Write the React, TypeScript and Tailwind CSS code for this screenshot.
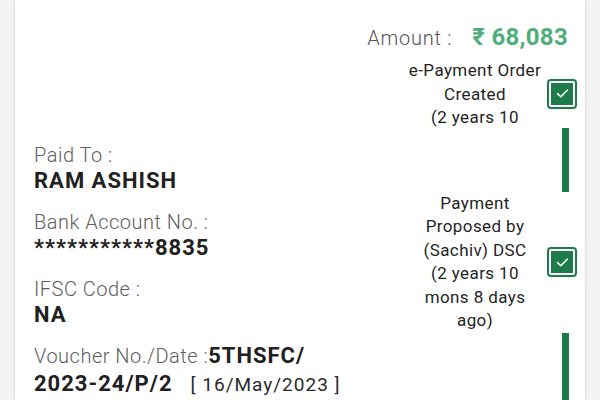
import React from 'react';

const CheckBox: React.FC = () => (
  <div className="w-[30px] h-[30px] shrink-0 rounded-[4px] border-2 border-[#1e7b4a] p-[2px]">
    <div className="w-full h-full bg-[#1e7b4a] flex items-center justify-center">
      <svg width="13" height="11" viewBox="0 0 13 11" fill="none">
        <path d="M1.5 5.6 L4.8 8.8 L11.5 2" stroke="white" strokeWidth="1.5" strokeLinecap="round" strokeLinejoin="round" />
      </svg>
    </div>
  </div>
);

interface StepProps {
  title: string;
  ago: string;
  clip?: string;
}

const Step: React.FC<StepProps> = ({ title, ago, clip = '' }) => (
  <div className="flex items-center">
    <div className={`w-[136px] text-center text-[17px] leading-[23.5px] tracking-[0.4px] text-[#1f1f1f] ${clip}`}>
      <div>{title}</div>
      <div>{ago}</div>
    </div>
    <div className="ml-[4px] flex items-center">
      <CheckBox />
    </div>
  </div>
);

const Bar: React.FC<{ h: string }> = ({ h }) => (
  <div className={`self-end mr-[8px] w-[7px] bg-[#1b7a4a] ${h}`} />
);

const labelCls = 'text-[20px] leading-[26px] font-light tracking-[0.5px] text-[#5e5e5e]';
const valueCls = 'text-[22px] leading-[26px] font-bold tracking-[1px] text-[#212121]';

export default function App() {
  return (
    <div className="min-h-screen bg-[#f4f4f4] px-[15px]" style={{ fontFamily: 'Roboto, "Noto Sans", sans-serif' }}>
      <div className="h-[400px] overflow-hidden bg-white shadow-[0_0_4px_rgba(0,0,0,0.14)] flex pl-[19px] pr-[8px]">
        {/* Left Column - payee details */}
        <div className="flex-1 pt-[142px]">
          <div className="flex flex-col gap-[15px]">
            <div>
              <div className={labelCls}>Paid To :</div>
              <div className={valueCls}>RAM ASHISH</div>
            </div>
            <div>
              <div className={labelCls}>Bank Account No. :</div>
              <div className={valueCls}>***********8835</div>
            </div>
            <div>
              <div className={labelCls}>IFSC Code :</div>
              <div className={valueCls}>NA</div>
            </div>
            <div className="leading-[26px] whitespace-nowrap">
              <span className={labelCls}>Voucher No./Date :</span>
              <span className={valueCls}>5THSFC/</span>
              <br />
              <span className={valueCls}>2023-24/P/2</span>
              <span className="ml-[18px] text-[19px] tracking-[1px] text-[#2a2a2a]">[ 16/May/2023 ]</span>
            </div>
          </div>
        </div>

        {/* Right Column - amount and status timeline */}
        <div className="flex flex-col items-end pt-[22px]">
          <div className="flex items-baseline mr-[9px] mb-[6px] leading-[30px]">
            <span className="text-[20px] font-light tracking-[0.75px] text-[#555]">Amount :</span>
            <span className="ml-[20px] text-[24px] font-bold tracking-[0.3px] text-[#4fae7c]">₹ 68,083</span>
          </div>
          <Step title="e-Payment Order Created" ago="(2 years 10 mons 8 days ago)" clip="h-[69px] overflow-hidden" />
          <Bar h="h-[66px]" />
          <Step title="Payment Proposed by (Sachiv) DSC" ago="(2 years 10 mons 8 days ago)" />
          <Bar h="h-[70px]" />
        </div>
      </div>
    </div>
  );
}
